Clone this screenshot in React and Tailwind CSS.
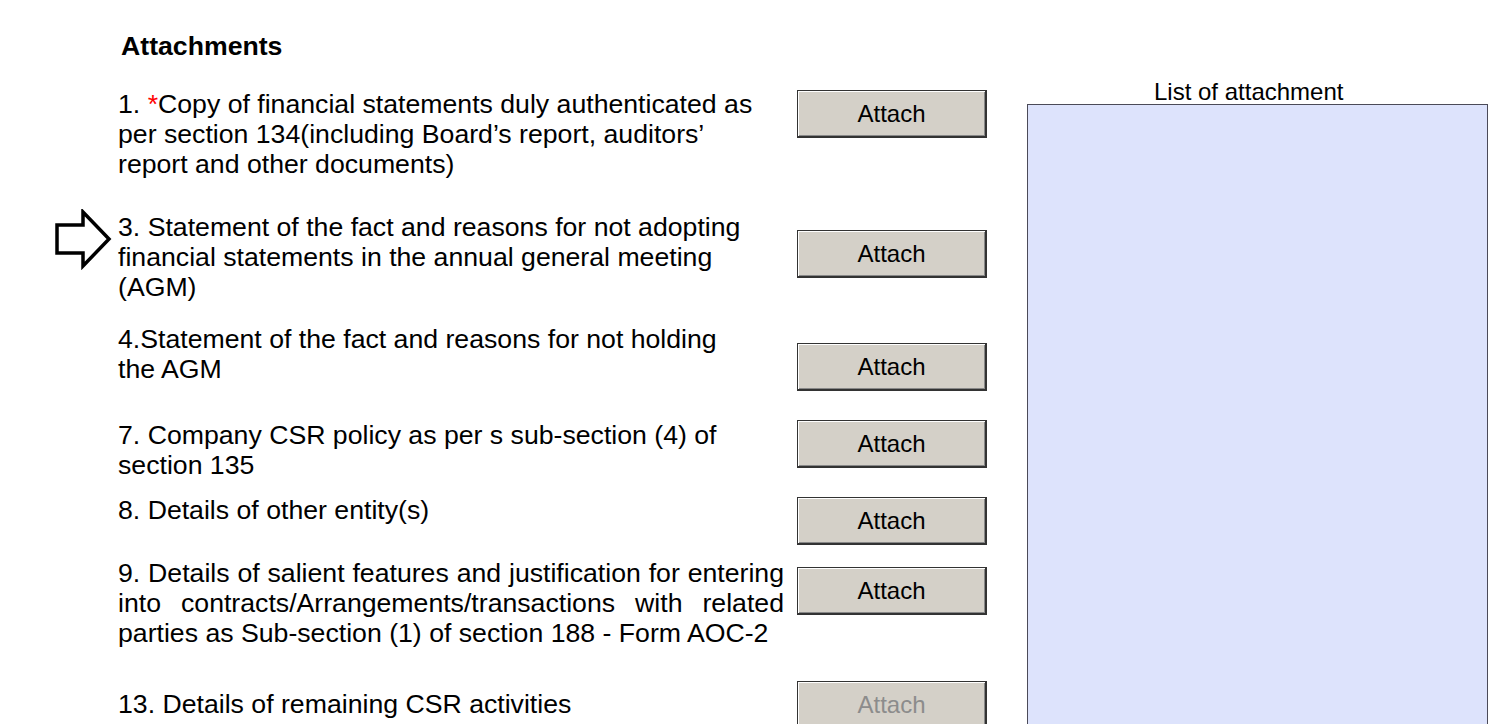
export default function App() {
  const btn =
    "w-[190px] h-[48px] shrink-0 bg-[#d4d0c8] border border-[#333333] border-b-2 border-r-2 shadow-[inset_1px_1px_0_#ffffff,inset_-1px_-1px_0_#888888] text-[24px] leading-[24px]";

  function Row({ h, textTop, btnTop, children, disabled, extra }) {
    return (
      <div className={`relative flex ${h}`}>
        {extra}
        <div className={`w-[666px] shrink-0 whitespace-nowrap ${textTop}`}>
          {children}
        </div>
        <div className={`ml-[13px] ${btnTop}`}>
          <button
            className={`${btn} ${disabled ? "text-[#8c8c8c]" : "text-black"}`}
          >
            Attach
          </button>
        </div>
      </div>
    );
  }

  return (
    <div className="w-[1489px] h-[724px] overflow-hidden bg-white flex font-['Liberation_Sans',Arial,sans-serif] text-black">
      <div className="w-[910px] shrink-0 pl-[118px] pt-[31px]">
        <h2 className="text-[26.67px] leading-[30px] font-bold pl-[3px]">
          Attachments
        </h2>

        <div className="mt-[28px] text-[26.67px] leading-[30px]">
          <Row h="h-[123px]" textTop="" btnTop="mt-[1px]">
            1. <span className="text-[#ff0000]">*</span>Copy of financial
            statements duly authenticated as
            <br />
            per section 134(including Board’s report, auditors’
            <br />
            report and other documents)
          </Row>

          <Row
            h="h-[112px]"
            textTop=""
            btnTop="mt-[18px]"
            extra={
              <svg
                className="absolute left-[-64px] top-[-3px]"
                width="58"
                height="61"
                viewBox="0 0 58 61"
                fill="none"
              >
                <path
                  d="M3 16 H29 V3 L55 30 L29 57 V44 H3 Z"
                  stroke="#000"
                  strokeWidth="3.5"
                  strokeLinejoin="miter"
                />
              </svg>
            }
          >
            3. Statement of the fact and reasons for not adopting
            <br />
            financial statements in the annual general meeting
            <br />
            (AGM)
          </Row>

          <Row h="h-[96px]" textTop="" btnTop="mt-[19px]">
            4.Statement of the fact and reasons for not holding
            <br />
            the AGM
          </Row>

          <Row h="h-[75px]" textTop="" btnTop="">
            7. Company CSR policy as per s sub-section (4) of
            <br />
            section 135
          </Row>

          <Row h="h-[63px]" textTop="" btnTop="mt-[2px]">
            8. Details of other entity(s)
          </Row>

          <Row h="h-[123px]" textTop="" btnTop="mt-[9px]">
            <span className="block text-justify [text-align-last:justify]">
              9. Details of salient features and justification for entering
            </span>
            <span className="block text-justify [text-align-last:justify]">
              into contracts/Arrangements/transactions with related
            </span>
            <span className="block">
              parties as Sub-section (1) of section 188 - Form AOC-2
            </span>
          </Row>

          <Row h="h-[60px]" textTop="mt-[8px]" btnTop="" disabled>
            13. Details of remaining CSR activities
          </Row>
        </div>
      </div>

      <div className="ml-[117px] w-[461px] shrink-0 pt-[80px]">
        <div className="pl-[127px] text-[24px] leading-[24px]">
          List of attachment
        </div>
        <div className="h-[640px] bg-[#dde3fc] border border-[#4b4b58]" />
      </div>
    </div>
  );
}
